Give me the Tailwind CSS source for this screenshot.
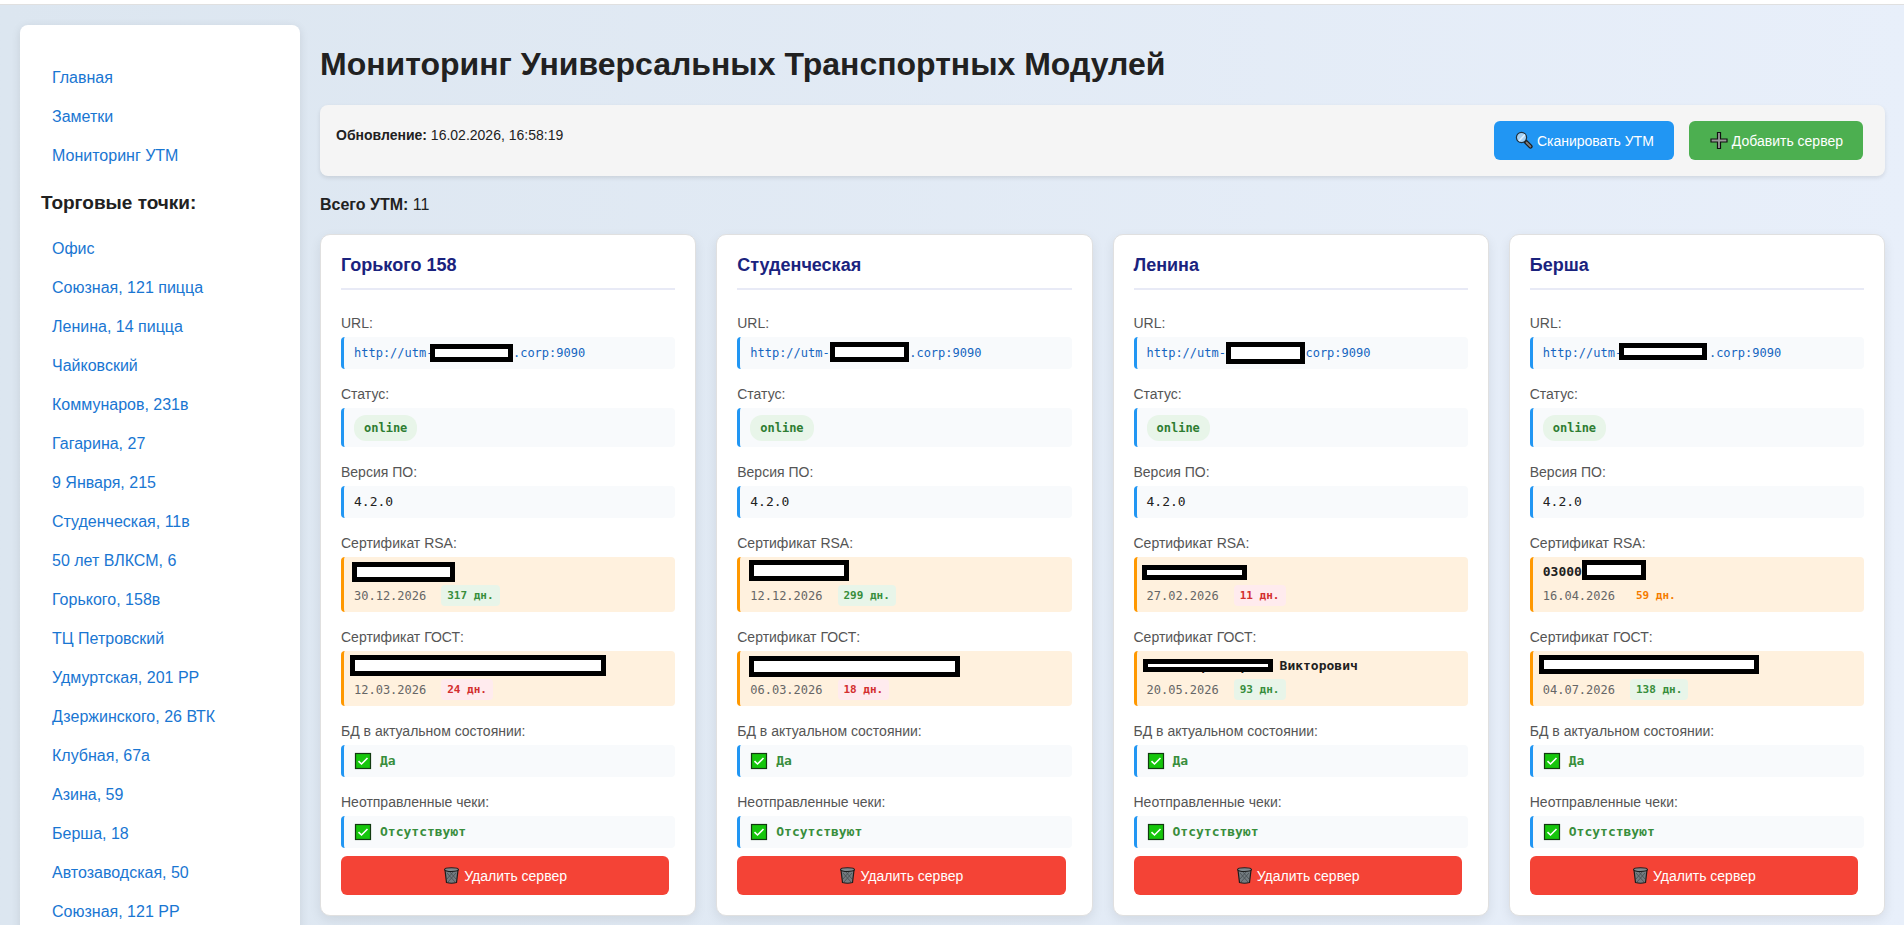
<!DOCTYPE html>
<html lang="ru">
<head>
    <meta charset="UTF-8">
    <meta name="viewport" content="width=device-width, initial-scale=1.0">
    <title>Мониторинг УТМ</title>
    <script src="https://cdn.jsdelivr.net/npm/@tailwindcss/browser@4"></script>
</head>
<body class="min-h-screen bg-linear-to-r from-[#dce6f0] to-[#e8effa] font-['Liberation_Sans',Arial,sans-serif] text-[#212121]">
    <!-- Верхняя полоса -->
    <div class="h-[5px] border-b border-[#e0e0e0] bg-white"></div>

    <div class="flex items-start gap-5 pt-5 pr-[19px] pb-5 pl-5">
        <!-- Боковое меню -->
        <nav class="w-[280px] shrink-0 rounded-lg bg-white px-5 pt-[33px] pb-5 shadow-[0_2px_10px_rgba(0,0,0,0.1)]">
            <ul id="mainMenu"></ul>
            <h3 class="mt-[14px] mb-3 pl-px text-[19px] leading-7 font-bold">Торговые точки:</h3>
            <ul id="shopMenu"></ul>
        </nav>

        <main class="min-w-0 flex-1">
            <h1 class="mt-[17px] text-[32px] leading-11 font-bold">Мониторинг Универсальных Транспортных Модулей</h1>

            <!-- Панель управления -->
            <div class="mt-[19px] flex items-start justify-between rounded-lg bg-[#f5f5f5] p-4 shadow-[0_2px_4px_rgba(0,0,0,0.1)]">
                <p class="pt-1 text-sm leading-5"><b>Обновление:</b> 16.02.2026, 16:58:19</p>
                <div class="mr-1.5 flex gap-[15px]">
                    <button type="button" class="flex h-[39px] items-center gap-1 rounded-md bg-[#2196f3] px-5 text-sm text-white">
                        <svg class="size-[19px]" viewBox="0 0 19 19">
                            <path d="M11.500 10.500l5 5" stroke="#1b1b1b" stroke-width="4.200" stroke-linecap="round"/>
                            <path d="M12.500 11.500l4 4" stroke="#7d7d7d" stroke-width="1.800" stroke-linecap="round"/>
                            <circle cx="7.500" cy="6.500" r="5.100" fill="#a3d0f3" stroke="#22333f" stroke-width="1.200"/>
                            <path d="M5 10l6-6.500" stroke="#dcefff" stroke-width="1.600"/>
                        </svg>
                        Сканировать УТМ
                    </button>
                    <button type="button" class="flex h-[39px] items-center gap-1 rounded-md bg-[#4caf50] px-5 text-sm text-white">
                        <svg class="size-[19px]" viewBox="0 0 19 19">
                            <path d="M8.500 1.500h3v6.500h6.500v3h-6.500v6.500h-3v-6.500h-6.500v-3h6.500z" fill="#999" stroke="#111" stroke-width="1.200"/>
                        </svg>
                        Добавить сервер
                    </button>
                </div>
            </div>

            <p class="mt-[17px] text-base leading-6"><b>Всего УТМ:</b> 11</p>

            <div id="serverGrid" class="mt-[17px] grid grid-cols-4 gap-5"></div>
        </main>
    </div>

    <script>
        const mainLinks = ['Главная', 'Заметки', 'Мониторинг УТМ'];
        const shopLinks = [
            'Офис', 'Союзная, 121 пицца', 'Ленина, 14 пицца', 'Чайковский', 'Коммунаров, 231в',
            'Гагарина, 27', '9 Января, 215', 'Студенческая, 11в', '50 лет ВЛКСМ, 6', 'Горького, 158в',
            'ТЦ Петровский', 'Удмуртская, 201 РР', 'Дзержинского, 26 ВТК', 'Клубная, 67а', 'Азина, 59',
            'Берша, 18', 'Автозаводская, 50', 'Союзная, 121 РР'
        ];

        const gap = n => '\u00a0'.repeat(n);

        // mask: [left, top, width, height] внутри поля
        const servers = [
            {
                name: 'Горького 158',
                url: { text: 'http://utm-' + gap(11) + '.corp:9090', mask: [86, 7, 83, 18] },
                rsa: { owner: '', date: '30.12.2026', days: 317, mask: [8, 5, 103, 20] },
                gost: { owner: '', date: '12.03.2026', days: 24, mask: [6, 4, 256, 21] }
            },
            {
                name: 'Студенческая',
                url: { text: 'http://utm-' + gap(11) + '.corp:9090', mask: [90, 5, 79, 20] },
                rsa: { owner: '', date: '12.12.2026', days: 299, mask: [9, 3, 100, 21] },
                gost: { owner: '', date: '06.03.2026', days: 18, mask: [9, 5, 211, 21] }
            },
            {
                name: 'Ленина',
                url: { text: 'http://utm-' + gap(10) + '.corp:9090', mask: [89, 5, 79, 22] },
                rsa: { owner: '', date: '27.02.2026', days: 11, mask: [5, 8, 105, 15] },
                gost: { owner: gap(7) + 'р' + gap(4) + 'р' + gap(4) + 'Викторович', date: '20.05.2026', days: 93, mask: [6, 8, 130, 13] }
            },
            {
                name: 'Берша',
                url: { text: 'http://utm-' + gap(12) + '.corp:9090', mask: [86, 6, 88, 17] },
                rsa: { owner: '03000', date: '16.04.2026', days: 59, mask: [49, 3, 64, 20] },
                gost: { owner: '', date: '04.07.2026', days: 138, mask: [6, 4, 220, 19] }
            }
        ];

        const checkIcon = `
            <svg class="size-[18px] shrink-0" viewBox="0 0 18 18">
                <rect x="1.500" y="1.500" width="15" height="15" fill="#16c60c" stroke="#123a10" stroke-width="1.200"/>
                <path d="M4.500 9.200l3 2.800 6-6" fill="none" stroke="#fff" stroke-width="1.600"/>
            </svg>`;

        const trashIcon = `
            <svg class="h-[19px] w-[17px]" viewBox="0 0 17 19">
                <path d="M2 4l1.500 12.500q5 1.500 10 0L15 4z" fill="#737b80" stroke="#1d1d1d" stroke-width="1.200"/>
                <path d="M4 7l8 9M7 6l6 7M13 7l-8 9M10 6l-6 7" stroke="#454b4f" stroke-width="0.800"/>
                <ellipse cx="8.500" cy="3.600" rx="7" ry="1.900" fill="#7f888d" stroke="#1d1d1d" stroke-width="1.100"/>
            </svg>`;

        function maskHtml([left, top, width, height]) {
            return `<span class="absolute border-[5px] border-black bg-white" style="left:${left}px;top:${top}px;width:${width}px;height:${height}px"></span>`;
        }

        function daysClass(days) {
            if (days < 30) return 'bg-[#ffebee] text-[#d32f2f]';
            if (days < 60) return 'text-[#f57c00]';
            return 'bg-[#e8f5e9] text-[#388e3c]';
        }

        function label(text) {
            return `<dt class="mt-[15px] mb-1 text-sm leading-5 text-[#555]">${text}</dt>`;
        }

        function certHtml(title, cert) {
            return `${label(title)}
                <dd class="relative rounded border-l-[3px] border-[#ff9800] bg-[#fff1de] px-2.5 py-1.5">
                    <p class="h-[18px] text-[13px] leading-[18px] font-bold">${cert.owner}</p>
                    <p class="mt-1 flex items-center gap-[15px] text-xs text-[#666]">
                        ${cert.date}
                        <span class="rounded px-1.5 text-[11px] leading-[21px] font-bold ${daysClass(cert.days)}">${cert.days} дн.</span>
                    </p>
                    ${maskHtml(cert.mask)}
                </dd>`;
        }

        function okHtml(title, text) {
            return `${label(title)}
                <dd class="flex h-8 items-center gap-2 rounded border-l-[3px] border-[#2196f3] bg-[#f8fafc] px-2.5 text-[13px] font-bold text-[#388e3c]">${checkIcon}${text}</dd>`;
        }

        function cardHtml(s) {
            return `
                <article class="rounded-[10px] border border-[#e0e0e0] bg-white p-5 shadow-[0_4px_12px_rgba(0,0,0,0.08)]">
                    <h2 class="mb-[23px] border-b-2 border-[#e8eaf6] pb-3 text-lg leading-[21px] font-bold text-[#1a237e]">${s.name}</h2>
                    <dl class="font-['DejaVu_Sans_Mono',monospace] [&_dt]:font-['Liberation_Sans',Arial,sans-serif]">
                        ${label('URL:')}
                        <dd class="relative rounded border-l-[3px] border-[#2196f3] bg-[#f8fafc] px-2.5 py-1.5 text-xs leading-5">
                            <a href="#" class="text-[#1565c0]">${s.url.text}</a>${maskHtml(s.url.mask)}
                        </dd>
                        ${label('Статус:')}
                        <dd class="flex h-[39px] items-center rounded border-l-[3px] border-[#2196f3] bg-[#f8fafc] px-2.5">
                            <span class="rounded-xl bg-[#e8f5e9] px-2.5 text-xs leading-[26px] font-bold text-[#2e7d32]">online</span>
                        </dd>
                        ${label('Версия ПО:')}
                        <dd class="h-8 rounded border-l-[3px] border-[#2196f3] bg-[#f8fafc] px-2.5 text-[13px] leading-8">4.2.0</dd>
                        ${certHtml('Сертификат RSA:', s.rsa)}
                        ${certHtml('Сертификат ГОСТ:', s.gost)}
                        ${okHtml('БД в актуальном состоянии:', 'Да')}
                        ${okHtml('Неотправленные чеки:', 'Отсутствуют')}
                    </dl>
                    <div class="mt-2 pr-1.5">
                        <button type="button" class="flex h-[39px] w-full items-center justify-center gap-1 rounded-md bg-[#f44336] text-sm text-white">${trashIcon}Удалить сервер</button>
                    </div>
                </article>`;
        }

        const linkHtml = text => `<li><a href="#" class="block px-3 py-2 text-base leading-[23px] text-[#1976d2]">${text}</a></li>`;

        document.getElementById('mainMenu').innerHTML = mainLinks.map(linkHtml).join('');
        document.getElementById('shopMenu').innerHTML = shopLinks.map(linkHtml).join('');
        document.getElementById('serverGrid').innerHTML = servers.map(cardHtml).join('');
    </script>
</body>
</html>
